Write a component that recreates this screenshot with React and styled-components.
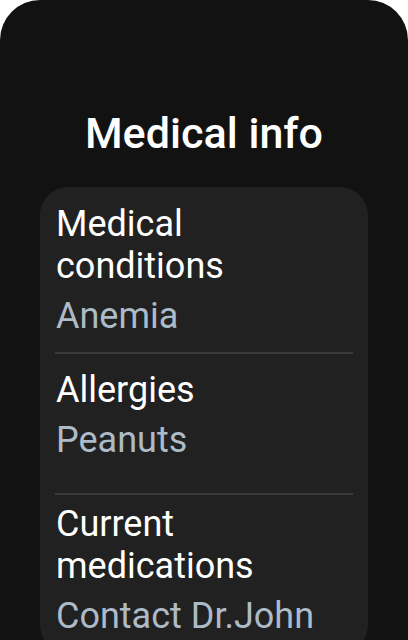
import React from 'react'
import styled, { createGlobalStyle } from 'styled-components'

const GlobalStyle = createGlobalStyle`
  html, body {
    margin: 0;
    padding: 0;
    background: #ffffff;
    font-family: Roboto, "Noto Sans", sans-serif;
  }
`

const Screen = styled.div`
  width: 408px;
  height: 640px;
  background-color: #121212;
  border-radius: 40px 40px 0 0;
  overflow: hidden;
  display: flex;
  flex-direction: column;
  align-items: center;
`

const Title = styled.h1`
  margin: 107px 0 28px;
  font-family: "Roboto Medium", Roboto, sans-serif;
  font-size: 43px;
  font-weight: 500;
  line-height: 52px;
  color: #ffffff;
  text-align: center;
`

const Card = styled.div`
  width: 328px;
  flex-shrink: 0;
  background-color: #212121;
  border-radius: 28px;
  display: flex;
  flex-direction: column;
`

const Row = styled.div`
  margin: 0 15px;
  padding: ${(p) => p.$pad};
  border-bottom: ${(p) => (p.$last ? 'none' : '2px solid #3a3a3a')};
`

const Label = styled.div`
  font-size: 36px;
  line-height: 42px;
  color: #ffffff;
  padding-left: 1px;
`

const Value = styled.div`
  margin-top: 8px;
  font-size: 36px;
  line-height: 42px;
  color: #acbbc7;
  padding-left: 1px;
  white-space: nowrap;
`

const items = [
  { label: ['Medical', 'conditions'], value: 'Anemia', pad: '16px 0 15px' },
  { label: ['Allergies'], value: 'Peanuts', pad: '15px 0 32px' },
  { label: ['Current', 'medications'], value: 'Contact Dr.John', pad: '8px 0 16px', last: true },
]

export default function App() {
  return (
    <>
      <GlobalStyle />
      <Screen>
        <Title>Medical info</Title>
        <Card>
          {items.map((it) => (
            <Row key={it.value} $pad={it.pad} $last={it.last}>
              {it.label.map((l) => (
                <Label key={l}>{l}</Label>
              ))}
              <Value>{it.value}</Value>
            </Row>
          ))}
        </Card>
      </Screen>
    </>
  )
}
